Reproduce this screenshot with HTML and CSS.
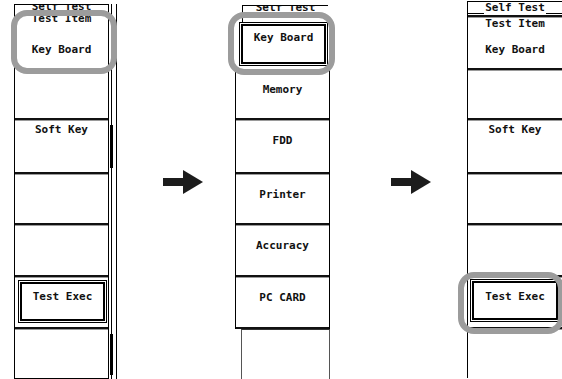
FILE: index.html
```html
<!DOCTYPE html>
<html>
<head>
<meta charset="utf-8">
<link rel="stylesheet" href="styles.css">
</head>
<body>
<div class="stage">
  <div class="panel-left">
    <div class="main main-left">
      <div class="hdr-cut"><span>Self Test</span></div>
      <div class="cell tall">
        <div class="lbl">Test Item</div>
        <div class="val">Key Board</div>
      </div>
      <div class="cell sep h54"><div class="lbl lbl-top">Soft Key</div></div>
      <div class="cell sep h51"></div>
      <div class="cell sep h52"></div>
      <div class="cell sep h52">
        <div class="btn btn-left">Test Exec</div>
      </div>
      <div class="cell sep h51"></div>
    </div>
    <div class="side">
      <div class="seg s114"></div>
      <div class="seg bar h54"></div>
      <div class="seg h51"></div>
      <div class="seg h52"></div>
      <div class="seg h52"></div>
      <div class="seg bar h52"></div>
    </div>
  </div>

  <svg class="arrow arrow-1" width="40" height="24" viewBox="0 0 40 24"><rect x="0" y="8" width="21" height="8" fill="#1c1c1c"/><polygon points="20,0 40,12 20,24" fill="#1c1c1c"/></svg>

  <div class="panel-mid">
    <div class="mid-hdr"><span>Self Test</span></div>
    <div class="btn btn-mid">Key Board</div>
    <div class="list">
      <div class="item h52 first">Memory</div>
      <div class="item sep h54">FDD</div>
      <div class="item sep h51">Printer</div>
      <div class="item sep h52">Accuracy</div>
      <div class="item sep h52 last">PC CARD</div>
    </div>
    <div class="mid-foot"></div>
  </div>

  <svg class="arrow arrow-2" width="40" height="24" viewBox="0 0 40 24"><rect x="0" y="8" width="21" height="8" fill="#1c1c1c"/><polygon points="20,0 40,12 20,24" fill="#1c1c1c"/></svg>

  <div class="panel-right">
    <div class="hdr-full"><i class="fill"></i><span>Self Test</span><i class="fill"></i></div>
    <div class="cell sep h53">
      <div class="lbl lbl-r">Test Item</div>
      <div class="val val-r">Key Board</div>
    </div>
    <div class="cell sep h50"></div>
    <div class="cell sep h54"><div class="lbl lbl-top">Soft Key</div></div>
    <div class="cell sep h51"></div>
    <div class="cell sep h52"></div>
    <div class="cell sep h52">
      <div class="btn btn-right">Test Exec</div>
    </div>
    <div class="cell sep h51"></div>
  </div>

  <div class="hl hl-1"></div>
  <div class="hl hl-2"></div>
  <div class="hl hl-3"></div>
</div>
</body>
</html>
```

FILE: styles.css
```css
* { box-sizing: border-box; margin: 0; padding: 0; }
html, body { width: 562px; height: 379px; overflow: hidden; background: #fff; }
body {
  font-family: "DejaVu Sans Mono", monospace;
  font-weight: bold;
  font-size: 11px;
  line-height: 11px;
  color: #111;
}
.stage { position: relative; display: flex; align-items: flex-start; height: 379px; }

/* shared cells */
.cell { flex: none; text-align: center; }
.sep { border-top: 2px solid #111; box-shadow: inset 0 1px 0 #9a9a9a; }
.h50 { height: 50px; }
.h51 { height: 51px; }
.h52 { height: 52px; }
.h53 { height: 53px; }
.h54 { height: 54px; }
.s114 { height: 114px; }

.lbl-top { padding-top: 4px; }

/* left panel */
.panel-left { display: flex; margin-left: 14px; }
.main {
  width: 95px;
  border-left: 1px solid #000;
  border-right: 1px solid #000;
  border-bottom: 1px solid #000;
  display: flex;
  flex-direction: column;
}
.main-left { margin-top: 4px; }
.hdr-cut {
  height: 9px;
  border-top: 1px solid #000;
  overflow: hidden;
  text-align: center;
}
.hdr-cut span { display: block; margin-top: -4px; }
.tall { height: 105px; }
.tall .val { margin-top: 20px; }

.side { width: 8px; margin-top: 4px; display: flex; flex-direction: column; }
.seg {
  flex: none;
  border-right: 1px solid #000;
  background: linear-gradient(90deg, transparent 2px, #000 2px, #000 3px, transparent 3px);
}
.seg.bar {
  background:
    linear-gradient(90deg, transparent 1px, #000 1px, #000 4px, transparent 4px) 0 7px / 100% calc(100% - 11px) no-repeat,
    linear-gradient(90deg, transparent 2px, #000 2px, #000 3px, transparent 3px);
}

/* buttons */
.btn {
  border: 1px solid #000;
  box-shadow: inset 0 0 0 1px #fff, inset 0 0 0 3px #000;
  background: #fff;
  text-align: center;
}
.btn-left { margin: 3px 0 0 3px; width: 89px; height: 43px; padding-top: 10px; }
.btn-right { margin: 2px 0 0 2px; width: 90px; height: 43px; padding-top: 11px; }
.btn-mid { margin-left: 4px; width: 89px; height: 44px; padding-top: 9px; }

/* arrows */
.arrow { flex: none; display: block; margin-top: 170px; }
.arrow-1 { margin-left: 46px; }
.arrow-2 { margin-left: 61px; }

/* middle panel */
.panel-mid { margin-left: 32px; width: 95px; display: flex; flex-direction: column; }
.mid-hdr {
  margin: 5px 0 0 7px;
  width: 86px;
  height: 17px;
  border-top: 1px solid #000;
  border-left: 1px solid #000;
  overflow: hidden;
  text-align: center;
}
.mid-hdr span { display: block; margin-top: -4px; }
.list {
  width: 95px;
  border-left: 1px solid #000;
  border-right: 1px solid #000;
  display: flex;
  flex-direction: column;
}
.item { flex: none; text-align: center; padding-top: 15px; }
.item.first { padding-top: 18px; }
.item.last { border-bottom: 2px solid #111; height: 54px; }
.mid-foot {
  margin-left: 6px;
  width: 89px;
  height: 51px;
  border: 1px solid #555;
  border-top-color: #333;
}

/* right panel */
.panel-right {
  margin-left: 36px;
  margin-top: 1px;
  width: 100px;
  border-left: 1px solid #000;
  border-top: 1px solid #000;
  display: flex;
  flex-direction: column;
}
.hdr-full { display: flex; align-items: flex-end; height: 13px; }
.hdr-full .fill { flex: 1; height: 100%; border-bottom: 1px solid #000; margin-bottom: 1px; }
.hdr-full span { padding: 0 1px; margin-bottom: 2px; }
.lbl-r { padding-top: 1px; }
.val-r { margin-top: 15px; }

/* gray highlight frames */
.hl {
  position: absolute;
  border: 6px solid #9c9c9c;
  border-radius: 16px;
}
.hl-1 { left: 11px; top: 10px; width: 106px; height: 64px; }
.hl-2 { left: 228px; top: 12px; width: 107px; height: 63px; }
.hl-3 { left: 458px; top: 272px; width: 106px; height: 62px; }
```
